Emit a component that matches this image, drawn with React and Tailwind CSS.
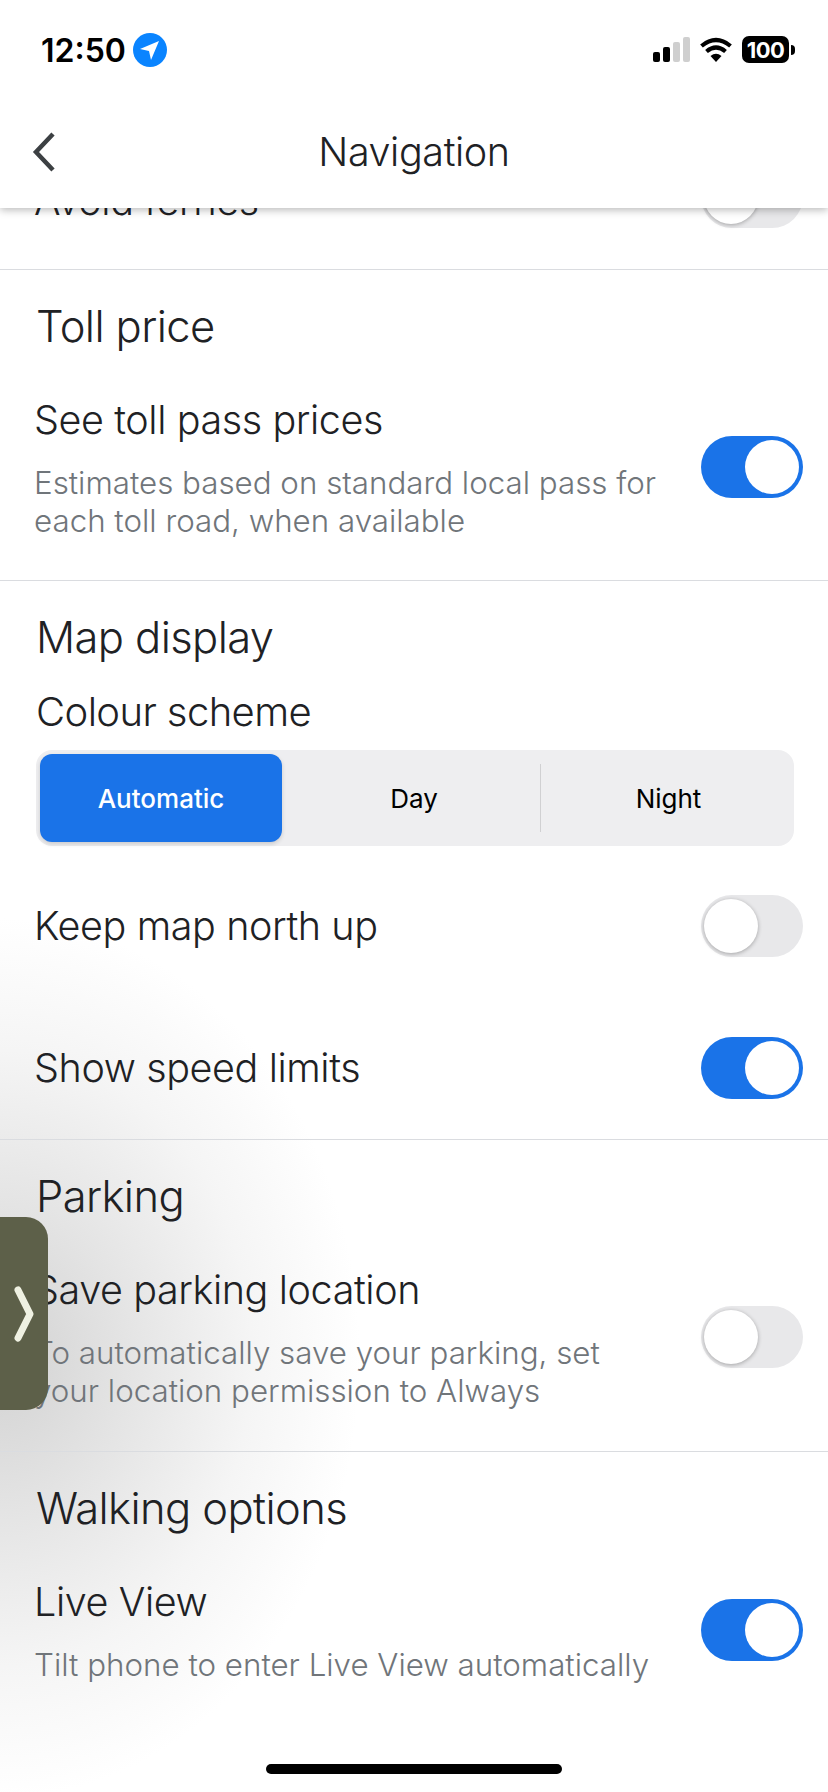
import React from 'react';

const font = { fontFamily: 'Inter, "Noto Sans", sans-serif' };

const Toggle = ({ on, className = '' }) => (
    <div
        className={`relative h-[62px] w-[102px] shrink-0 rounded-full ${on ? 'bg-[#1a73e8]' : 'bg-[#e8e8ea]'} ${className}`}
    >
        <div
            className={`absolute top-[4px] h-[54px] w-[54px] rounded-full bg-white ${
                on ? 'left-[44px]' : 'left-[3px] shadow-[0_1px_4px_rgba(0,0,0,0.3)]'
            }`}
        />
    </div>
);

const Heading = ({ children, className = 'text-[43.5px]' }) => (
    <h2 className={`pl-[36px] leading-[50px] font-light tracking-[-0.6px] text-[#202124] ${className}`}>{children}</h2>
);

const SettingRow = ({ title, sub, on, className = '' }) => (
    <div className={`flex items-center justify-between pl-[34px] pr-[25px] ${className}`}>
        <div>
            <div className="text-[39.5px] leading-[46px] font-light tracking-[-0.4px] text-[#202124]">{title}</div>
            {sub && (
                <div className="mt-[21px] text-[31.3px] leading-[38px] font-light text-[#70757a]">
                    {sub.map((line) => (
                        <div key={line}>{line}</div>
                    ))}
                </div>
            )}
        </div>
        <Toggle on={on} className={sub ? 'mb-[4px]' : ''} />
    </div>
);

const StatusBar = () => (
    <div className="flex h-[100px] items-start justify-between pl-[41px] pr-[33px] pt-[33px]">
        <div className="flex items-center gap-[7px]">
            <span className="text-[32px] leading-[33px] font-semibold text-black">12:50</span>
            <svg width="34" height="34" viewBox="0 0 34 34">
                <circle cx="17" cy="17" r="17" fill="#0a84ff" />
                <path d="M26 8 L7 16 L16 18 L18 27 Z" fill="#fff" />
            </svg>
        </div>
        <div className="flex items-center pt-[3px]">
            <svg width="38" height="26" viewBox="0 0 38 26">
                <rect x="0" y="15" width="7" height="10" rx="2" fill="#000" />
                <rect x="10" y="10" width="7" height="15" rx="2" fill="#000" />
                <rect x="20" y="5" width="7" height="20" rx="2" fill="#cfcfcf" />
                <rect x="30" y="0" width="7" height="25" rx="2" fill="#cfcfcf" />
            </svg>
            <svg className="ml-[9px]" width="32" height="26" viewBox="0 0 32 26">
                <path d="M16 25 L10.5 19 Q16 14.5 21.5 19 Z" fill="#000" />
                <path d="M6.5 14.5 Q16 6.5 25.5 14.5" fill="none" stroke="#000" strokeWidth="4.2" />
                <path d="M1.5 9 Q16 -3 30.5 9" fill="none" stroke="#000" strokeWidth="4.2" />
            </svg>
            <div className="ml-[10px] flex h-[27px] w-[47px] items-center justify-center rounded-[7px] bg-black text-[22px] font-bold leading-none tracking-[-0.5px] text-white">
                100
            </div>
            <div className="ml-[2px] h-[10px] w-[4px] rounded-r-full bg-black" />
        </div>
    </div>
);

export default function App() {
    return (
        <div className="relative flex h-[1792px] w-[828px] flex-col overflow-hidden bg-white" style={font}>
            <header className="relative z-10 h-[208px] bg-white shadow-[0_2px_8px_rgba(0,0,0,0.28)]">
                <StatusBar />
                <div className="relative flex h-[104px] items-center justify-center">
                    <svg className="absolute left-[32px] top-[32px]" width="24" height="40" viewBox="0 0 24 40">
                        <path d="M21 2 L4 20 L21 38" fill="none" stroke="#3c4043" strokeWidth="4.5" />
                    </svg>
                    <span className="text-[39.5px] leading-[46px] font-light tracking-[-0.4px] text-[#202124]">Navigation</span>
                </div>
            </header>

            <main className="flex-1 overflow-hidden bg-[radial-gradient(ellipse_360px_440px_at_0px_1150px,#d2d2d2,#e4e4e4_35%,#f5f5f5_70%,#ffffff)]">
                {/* scrolled list, the ferries row is cut by the header */}
                <div className="-mt-[34px] flex items-center justify-between border-b border-[#dadce0] pb-[41px] pl-[34px] pr-[25px]">
                    <span className="text-[39.5px] leading-[46px] font-light tracking-[-0.4px] text-[#202124]">Avoid ferries</span>
                    <Toggle on={false} className="-mt-[8px]" />
                </div>

                <section className="border-b border-[#dadce0] pb-[40px] pt-[31px]">
                    <Heading>Toll price</Heading>
                    <SettingRow
                        className="mt-[46px]"
                        title="See toll pass prices"
                        sub={['Estimates based on standard local pass for', 'each toll road, when available']}
                        on
                    />
                </section>

                <section className="border-b border-[#dadce0] pb-[40px] pt-[31px]">
                    <Heading>Map display</Heading>
                    <Heading className="mt-[25px] text-[40px]">Colour scheme</Heading>
                    <div className="mx-[36px] mt-[13px] flex h-[96px] w-[758px] items-center rounded-[16px] bg-[#eeeef0] p-[4px] text-[26px]">
                        <div className="flex h-[88px] w-[242px] items-center justify-center rounded-[12px] bg-[#1a73e8] font-medium text-white shadow-[0_2px_4px_rgba(0,0,0,0.15)]">
                            Automatic
                        </div>
                        <div className="flex h-[68px] w-[259px] items-center justify-center border-r border-[#d0d0d2] pl-[6px] text-black">
                            Day
                        </div>
                        <div className="flex flex-1 items-center justify-center pl-[6px] text-black">Night</div>
                    </div>
                    <SettingRow className="mt-[49px]" title="Keep map north up" on={false} />
                    <SettingRow className="mt-[80px]" title="Show speed limits" on />
                </section>

                <section className="border-b border-[#dadce0] pb-[41px] pt-[31px]">
                    <Heading>Parking</Heading>
                    <SettingRow
                        className="mt-[46px]"
                        title="Save parking location"
                        sub={['To automatically save your parking, set', 'your location permission to Always']}
                        on={false}
                    />
                </section>

                <section className="pt-[31px]">
                    <Heading>Walking options</Heading>
                    <SettingRow
                        className="mt-[46px]"
                        title="Live View"
                        sub={['Tilt phone to enter Live View automatically']}
                        on
                    />
                </section>
            </main>

            {/* floating side tab */}
            <div className="absolute left-0 top-[1217px] z-20 flex h-[193px] w-[48px] items-center justify-end rounded-r-[22px] bg-[#5d6049] pr-[14px]">
                <svg width="20" height="56" viewBox="0 0 20 56">
                    <path d="M4 4 L16 28 L4 52" fill="none" stroke="#eff1e2" strokeWidth="7" strokeLinecap="round" strokeLinejoin="round" />
                </svg>
            </div>

            {/* home indicator */}
            <div className="absolute bottom-[18px] left-[266px] z-20 h-[10px] w-[296px] rounded-full bg-black" />
        </div>
    );
}
